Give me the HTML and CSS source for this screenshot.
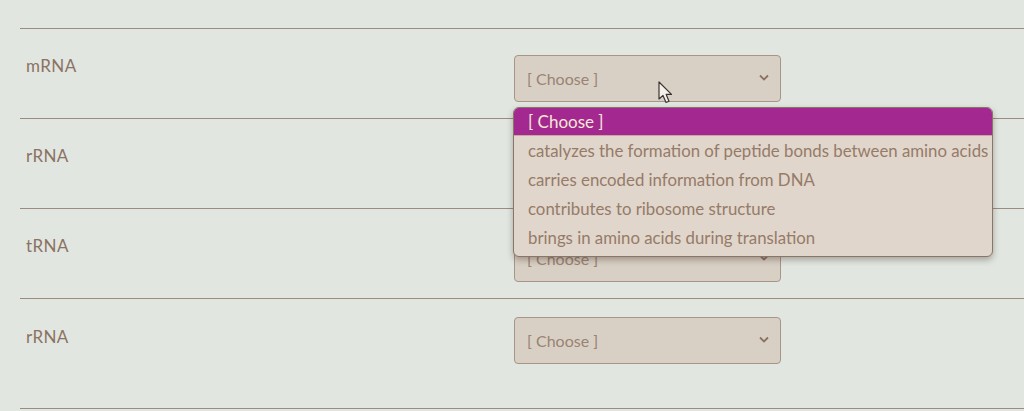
FILE: index.html
```html
<!DOCTYPE html>
<html lang="en">
<head>
  <meta charset="UTF-8" />
  <meta name="viewport" content="width=device-width, initial-scale=1.0" />
  <title>Match the RNA</title>
  <link rel="stylesheet" href="styles.css">
</head>
<body>

  <section class="quiz">
    <div class="row">
      <div class="label">mRNA</div>
      <div class="select-wrap">
        <div class="select">
          <span>[ Choose ]</span>
          <svg class="chev" width="10" height="7" viewBox="0 0 10 7"><path d="M1 1.5 L5 5.5 L9 1.5" fill="none" stroke="#8a7262" stroke-width="1.8"/></svg>
        </div>

        <svg class="cursor" width="16" height="24" viewBox="0 0 16 24">
          <path d="M1 1 L1 18 L5 14.5 L8 21.5 L11 20.2 L8.2 13.4 L13.5 13.4 Z" fill="#f4f1ec" stroke="#3a3532" stroke-width="1.2" stroke-linejoin="round"/>
        </svg>

        <ul class="dropdown">
          <li class="active">[ Choose ]</li>
          <li>catalyzes the formation of peptide bonds between amino acids</li>
          <li>carries encoded information from DNA</li>
          <li>contributes to ribosome structure</li>
          <li>brings in amino acids during translation</li>
        </ul>
      </div>
    </div>

    <div class="row">
      <div class="label">rRNA</div>
      <div class="select">
        <span>[ Choose ]</span>
        <svg class="chev" width="10" height="7" viewBox="0 0 10 7"><path d="M1 1.5 L5 5.5 L9 1.5" fill="none" stroke="#8a7262" stroke-width="1.8"/></svg>
      </div>
    </div>

    <div class="row">
      <div class="label">tRNA</div>
      <div class="select">
        <span>[ Choose ]</span>
        <svg class="chev" width="10" height="7" viewBox="0 0 10 7"><path d="M1 1.5 L5 5.5 L9 1.5" fill="none" stroke="#8a7262" stroke-width="1.8"/></svg>
      </div>
    </div>

    <div class="row last">
      <div class="label">rRNA</div>
      <div class="select">
        <span>[ Choose ]</span>
        <svg class="chev" width="10" height="7" viewBox="0 0 10 7"><path d="M1 1.5 L5 5.5 L9 1.5" fill="none" stroke="#8a7262" stroke-width="1.8"/></svg>
      </div>
    </div>
  </section>

</body>
</html>
```

FILE: styles.css
```css
body {
  margin: 0;
  padding: 0;
  background-color: #e1e6e1;
  font-family: Lato, 'Open Sans', sans-serif;
  color: #8b7262;
  overflow: hidden;
}
.quiz {
  margin: 28px 0 0 20px;
  border-bottom: 1px solid #9d8b7d;
}
.row {
  display: grid;
  grid-template-columns: 494px 267px;
  padding: 26px 0 15px;
  height: 48px;
  border-top: 1px solid #9d8b7d;
}
.row.last {
  padding-top: 18px;
  height: 76px;
}
.label {
  padding: 0 0 0 6px;
  font-size: 17px;
  letter-spacing: 0.4px;
}
.row.last .label {
  padding-top: 9px;
}
.select-wrap {
  position: relative;
}
.select {
  height: 47px;
  box-sizing: border-box;
  display: flex;
  align-items: center;
  justify-content: space-between;
  padding: 0 11px 0 12px;
  background-color: #d9d0c5;
  border: 1px solid #a89585;
  border-radius: 4px;
  font-size: 16px;
  color: #9a8373;
}
.chev {
  margin-top: -2px;
}
.dropdown {
  position: absolute;
  top: 52px;
  left: -1px;
  width: 478px;
  margin: 0;
  padding: 0 0 4px;
  list-style: none;
  background-color: #e0d6cc;
  border: 1px solid #8a7668;
  border-radius: 6px;
  overflow: hidden;
  box-shadow: 0 3px 6px rgba(60, 40, 30, 0.35);
  z-index: 2;
}
.dropdown li {
  padding: 0 0 0 14px;
  height: 29px;
  line-height: 29px;
  font-size: 16.8px;
  white-space: nowrap;
  color: #967b68;
}
.dropdown li.active {
  height: 27px;
  line-height: 27px;
  font-size: 17px;
  background-color: #a3288f;
  color: #f7e8d6;
  border-bottom: 1px solid #c9a8a0;
}
.cursor {
  position: absolute;
  top: 26px;
  left: 144px;
  z-index: 3;
}
```
